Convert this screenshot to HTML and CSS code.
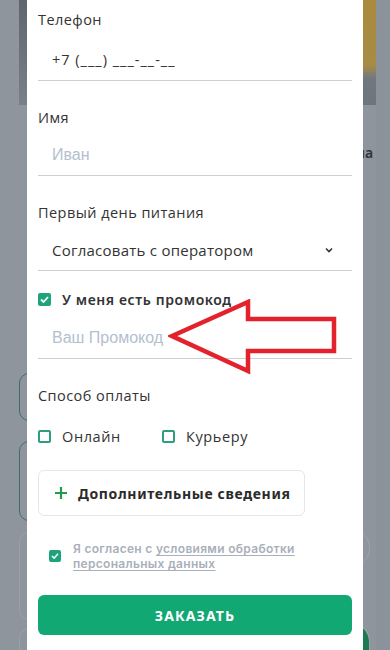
FILE: index.html
```html
<!DOCTYPE html>
<html lang="ru">
<head>
<meta charset="utf-8">
<link rel="stylesheet" href="styles.css">
</head>
<body>
<div class="backdrop">
  <div class="bg-img-left"></div>
  <div class="bg-img-right"></div>
  <div class="bg-text">на</div>
  <div class="bg-card bg-card-1"></div>
  <div class="bg-card bg-card-2"></div>
  <div class="bg-card bg-card-3"></div>
  <div class="bg-card bg-card-4"></div>
  <div class="bg-circle bg-circle-1"></div>
  <div class="bg-circle bg-circle-2"></div>
  <div class="bg-edge"></div>
</div>
<div class="modal">
  <div class="field field-first">
    <div class="label">Телефон</div>
    <div class="input input-phone">+7 (___) ___-__-__</div>
  </div>
  <div class="field">
    <div class="label">Имя</div>
    <div class="input placeholder">Иван</div>
  </div>
  <div class="field">
    <div class="label">Первый день питания</div>
    <div class="input select">
      <span>Согласовать с оператором</span>
      <svg class="chev" width="10" height="7" viewBox="0 0 10 7"><polyline points="2,1.5 5,4.5 8,1.5" fill="none" stroke="#333" stroke-width="1.6"/></svg>
    </div>
  </div>
  <div class="check-row promo-row">
    <span class="cb cb-on"><svg width="9" height="7" viewBox="0 0 9 7"><polyline points="1,3.5 3.5,6 8,1" fill="none" stroke="#fff" stroke-width="1.8"/></svg></span>
    <span class="promo-text">У меня есть промокод</span>
  </div>
  <div class="input placeholder promo-input">Ваш Промокод</div>
  <div class="field">
    <div class="label">Способ оплаты</div>
  </div>
  <div class="pay-row">
    <div class="pay-item pay-online"><span class="cb cb-off"></span><span>Онлайн</span></div>
    <div class="pay-item"><span class="cb cb-off"></span><span>Курьеру</span></div>
  </div>
  <button class="more-btn">
    <svg width="14" height="14" viewBox="0 0 14 14"><path d="M7 1v12M1 7h12" stroke="#1f9d4a" stroke-width="2.2" fill="none"/></svg>
    <span>Дополнительные сведения</span>
  </button>
  <div class="consent">
    <span class="cb cb-on cb-small"><svg width="8" height="6" viewBox="0 0 9 7"><polyline points="1,3.5 3.5,6 8,1" fill="none" stroke="#fff" stroke-width="1.8"/></svg></span>
    <div class="consent-text">
      <span class="consent-line">Я согласен с <u>условиями обработки</u></span>
      <span class="consent-line"><u>персональных данных</u></span>
    </div>
  </div>
  <button class="order-btn">ЗАКАЗАТЬ</button>
  <svg class="arrow" width="180" height="90" viewBox="0 0 180 90">
    <polygon points="4,37 80,3 80,20 166,20 166,52 80,52 80,72" fill="none" stroke="#e3222b" stroke-width="4.5" stroke-linejoin="miter"/>
  </svg>
</div>
</body>
</html>
```
FILE: styles.css
```css
* { box-sizing: border-box; }
html, body { margin: 0; padding: 0; }
body {
  width: 390px;
  height: 650px;
  overflow: hidden;
  background: #8f959d;
  position: relative;
  font-family: "Open Sans", "Noto Sans", sans-serif;
  color: #333;
}
.backdrop { position: absolute; inset: 0; overflow: hidden; }
.bg-img-left {
  position: absolute; left: 19px; top: 0; width: 10px; height: 105px;
  background: linear-gradient(#5f656d, #7a8088);
}
.bg-img-right {
  position: absolute; left: 360px; top: 0; width: 17px; height: 105px;
  background: linear-gradient(#a98a3e 0%, #a88c45 62%, #6f7780 75%, #6c747c 100%);
}
.bg-text {
  position: absolute; left: 356px; top: 143px;
  font: 600 14px "Noto Sans", sans-serif; color: #2f3339;
}
.bg-edge {
  position: absolute; left: 376px; top: 0; width: 14px; height: 650px;
  background: #8c929a;
}
.bg-card {
  position: absolute; left: 19px; width: 60px; border-radius: 10px;
  border: 1px solid #3f6f60;
}
.bg-card-1 { top: 373px; height: 48px; }
.bg-card-2 { top: 441px; height: 80px; }
.bg-card-3 { top: 532px; height: 88px; border-color: #9aa0a7; }
.bg-card-4 { top: 628px; height: 22px; border-color: #9aa0a7; border-bottom: none; border-radius: 10px 10px 0 0; }
.bg-circle {
  position: absolute; left: 330px; width: 40px; border-radius: 50%;
}
.bg-circle-1 { top: 528px; height: 40px; border: 1px solid #9ea4ab; }
.bg-circle-2 { top: 622px; height: 28px; border-radius: 20px 20px 0 0; background: #1b7a52; border: 1px solid #9ea4ab; border-bottom: none; }

.modal {
  position: absolute; left: 27px; top: 0; width: 336px; height: 650px;
  background: #fff;
  padding: 0 11px;
  overflow: hidden;
}
.field { margin-top: 27px; }
.field-first { margin-top: 0; padding-top: 10px; }
.label { font-size: 14.5px; line-height: 20px; color: #333; letter-spacing: 0.45px; }
.input {
  height: 41px; line-height: 40px; border-bottom: 1px solid #cfcfcf;
  padding-left: 14px; font-size: 14px; color: #333; margin-top: 7px;
}
.input-phone { margin-top: 10px; letter-spacing: 1px; font-size: 14.5px; }
.placeholder {
  font-family: "Liberation Sans", Arial, sans-serif; font-size: 16px; color: #b3c0d0; letter-spacing: 0;
}
.select { display: flex; justify-content: space-between; align-items: center; padding-right: 18px; font-size: 15px; letter-spacing: 0.25px; }
.select span { line-height: 40px; }
.check-row { display: flex; align-items: center; gap: 11px; height: 20px; margin-top: 18px; }
.cb {
  width: 13px; height: 13px; border-radius: 2px; flex: none;
  display: inline-flex; align-items: center; justify-content: center;
}
.cb-on { background: #1fa37a; }
.cb-off { border: 2px solid #2f9e7e; }
.promo-text {
  font-family: "Noto Sans", sans-serif; font-weight: 600; font-size: 14px; color: #333; letter-spacing: 0.6px;
}
.promo-input { margin-top: 9px; height: 41px; }
.pay-row { display: flex; margin-top: 20px; height: 20px; align-items: center; font-size: 14.5px; letter-spacing: 0.6px; }
.pay-item { display: flex; align-items: center; gap: 11px; }
.pay-online { width: 124px; }
.more-btn {
  display: flex; align-items: center; gap: 10px;
  margin-top: 24px; height: 46px; width: 267px;
  padding: 0 0 0 15px;
  background: #fff; border: 1px solid #e6e6e6; border-radius: 6px;
  font-family: "Noto Sans", sans-serif; font-weight: 700; font-size: 14px; color: #2b2b2b; letter-spacing: 0.65px;
}
.consent { display: flex; align-items: center; gap: 12px; margin-top: 25px; padding-left: 11px; }
.cb-small { width: 12px; height: 12px; }
.consent-text {
  font-family: Inter, "Noto Sans", sans-serif; font-weight: 600; font-size: 12px;
  line-height: 15px; color: #a9b0ba; width: 240px; letter-spacing: 0.3px;
}
.consent-line { display: block; height: 15px; white-space: nowrap; }
.consent-text u { text-decoration-thickness: 1px; text-underline-offset: 2px; }
.order-btn {
  display: block; width: 314px; height: 40px; margin-top: 24px;
  background: #12a873; border: none; border-radius: 6px; color: #fff;
  font-family: "Noto Sans", sans-serif; font-weight: 700; font-size: 14px; letter-spacing: 1.1px;
}
.arrow { position: absolute; left: 141px; top: 299px; }
```
